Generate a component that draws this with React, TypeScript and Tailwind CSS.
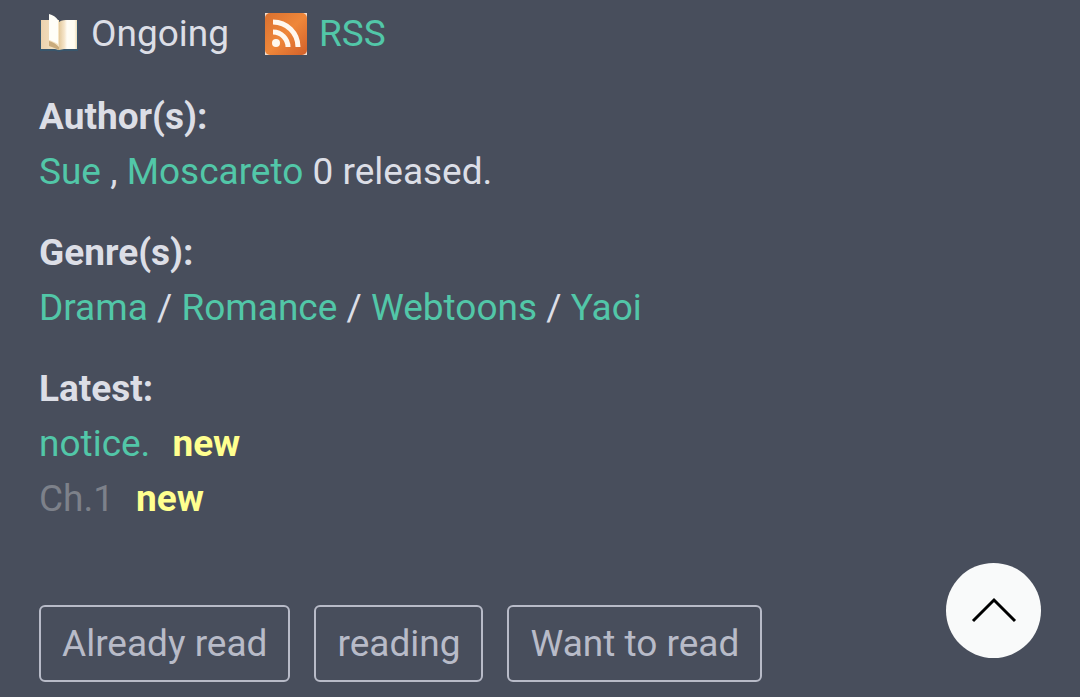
import type { ReactNode } from 'react';

const genres = ['Drama', 'Romance', 'Webtoons', 'Yaoi'];
const shelves = ['Already read', 'reading', 'Want to read'];

const BookIcon = () => (
  <svg className="w-10 h-10" viewBox="0 0 40 40" aria-hidden="true">
    <defs>
      <linearGradient id="page-left">
        <stop offset="0" stopColor="#ecd2ae" />
        <stop offset="1" stopColor="#f6e6c6" />
      </linearGradient>
      <linearGradient id="page-right">
        <stop offset="0" stopColor="#e3c99c" />
        <stop offset="0.3" stopColor="#f6e6cb" />
        <stop offset="0.45" stopColor="#fffdf6" />
        <stop offset="0.85" stopColor="#fffdf0" />
        <stop offset="1" stopColor="#eddcb8" />
      </linearGradient>
      <filter id="page-soft">
        <feGaussianBlur stdDeviation="0.6" />
      </filter>
    </defs>
    <g filter="url(#page-soft)">
      <path d="M1 7h38v30H23l-3 1-3-1H1z" fill="#38566c" />
      <path d="M2 6h18v30l-4-1H2z" fill="url(#page-left)" />
      <path d="M20 8c3-2 6-2 9-2h9v29H25l-5 1z" fill="url(#page-right)" />
      <path d="M10 27c4 1 7 3 10 6v3c-3-1-6-3-10-4z" fill="#c9ab7c" />
      <path d="M10 0c4 1 7 3 9 6v24c-3-2-6-3-9-4z" fill="#fffef8" />
    </g>
  </svg>
);

const RssIcon = () => (
  <svg className="w-[42px] h-[42px]" viewBox="0 0 42 42" aria-hidden="true">
    <defs>
      <linearGradient id="rss-fill" x2="1" y2="1">
        <stop offset="0" stopColor="#d9702f" />
        <stop offset="0.5" stopColor="#ef873a" />
        <stop offset="1" stopColor="#d2602a" />
      </linearGradient>
      <filter id="rss-soft">
        <feGaussianBlur stdDeviation="0.7" />
      </filter>
    </defs>
    <rect width="42" height="42" fill="#f3dccb" />
    <rect width="42" height="42" rx="5" fill="url(#rss-fill)" />
    <g filter="url(#rss-soft)">
      <circle cx="11" cy="30" r="4" fill="#fff8ef" />
      <path d="M8 19a15 15 0 0 1 15 15M8 9a25 25 0 0 1 25 25" fill="none" stroke="#fff8ef" strokeWidth="5" />
    </g>
  </svg>
);

const TextLink = ({ children }: { children: ReactNode }) => (
  <a href="#" className="text-[#52c7a8]">{children}</a>
);

const Section = ({ title, children }: { title: string; children: ReactNode }) => (
  <section className="mb-[26px]">
    <h2 className="font-bold">{title}</h2>
    {children}
  </section>
);

const App = () => {
  return (
    <main className="min-h-screen bg-[#484e5c] text-[#dcdee6] px-[39px] pt-[6px] pb-[15px] font-['Roboto',sans-serif] text-[37px] leading-[55px]">
      <div className="flex items-center mb-7">
        <BookIcon />
        <span className="ml-3 mr-9">Ongoing</span>
        <a href="#" className="flex items-center gap-3 text-[#52c7a8]">
          <RssIcon />
          RSS
        </a>
      </div>

      <Section title="Author(s):">
        <p>
          <TextLink>Sue</TextLink> , <TextLink>Moscareto</TextLink> 0 released.
        </p>
      </Section>

      <Section title="Genre(s):">
        <p>
          {genres.map((genre, i) => (
            <span key={genre}>
              {i > 0 && ' / '}
              <TextLink>{genre}</TextLink>
            </span>
          ))}
        </p>
      </Section>

      <Section title="Latest:">
        <ul>
          <li className="flex gap-[22px]">
            <TextLink>notice.</TextLink>
            <strong className="text-[#ffff8f]">new</strong>
          </li>
          <li className="flex gap-[22px]">
            <a href="#" className="text-[#7d818a]">Ch.1</a>
            <strong className="text-[#ffff8f]">new</strong>
          </li>
        </ul>
      </Section>

      <div className="flex flex-wrap gap-6 pt-[53px]">
        {shelves.map((shelf) => (
          <button key={shelf} type="button" className="h-[77px] px-[21px] border-2 border-[#b8bbc8] rounded-md text-[#b8bbc8]">
            {shelf}
          </button>
        ))}
      </div>

      {/* Back to top */}
      <button
        type="button"
        aria-label="Back to top"
        className="fixed right-[39px] bottom-[39px] flex items-center justify-center w-[95px] h-[95px] rounded-full bg-[#f9fafa]"
      >
        <svg className="w-12 h-12" viewBox="0 0 48 48" fill="none" stroke="#000" strokeWidth="3" aria-hidden="true">
          <path d="M3 34L24 13l21 21" />
        </svg>
      </button>
    </main>
  );
};

export default App;
